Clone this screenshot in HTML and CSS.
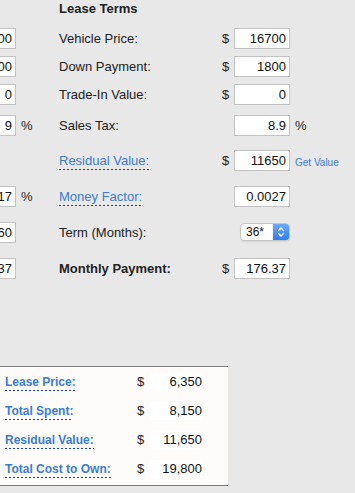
FILE: index.html
```html
<!DOCTYPE html>
<html>

<head>
  <meta charset="utf-8">
  <meta name="viewport" content="width=device-width, initial-scale=1.0">
  <link rel="stylesheet" href="styles.css">
</head>

<body>
  <div class="calculators">
    <!-- loan side, mostly scrolled out of view -->
    <div class="terms">
      <div class="title">Loan Terms</div>

      <div class="label">Vehicle Price:</div>
      <div class="unit">$</div>
      <div class="field">16700</div>
      <div class="suffix"></div>

      <div class="label">Down Payment:</div>
      <div class="unit">$</div>
      <div class="field">1800</div>
      <div class="suffix"></div>

      <div class="label">Trade-In Value:</div>
      <div class="unit">$</div>
      <div class="field">0</div>
      <div class="suffix"></div>

      <div class="label">Sales Tax:</div>
      <div class="unit"></div>
      <div class="field">9</div>
      <div class="suffix">%</div>

      <div class="label"></div>
      <div class="unit"></div>
      <div class="blank"></div>
      <div class="suffix"></div>

      <div class="label"><span class="hint">Interest Rate:</span></div>
      <div class="unit"></div>
      <div class="field">4.17</div>
      <div class="suffix">%</div>

      <div class="label">Term (Months):</div>
      <div class="unit"></div>
      <div class="field">60</div>
      <div class="suffix"></div>

      <div class="label strong">Monthly Payment:</div>
      <div class="unit">$</div>
      <div class="field">337.37</div>
      <div class="suffix"></div>
    </div>

    <!-- lease side -->
    <div class="terms">
      <div class="title">Lease Terms</div>

      <div class="label">Vehicle Price:</div>
      <div class="unit">$</div>
      <div class="field">16700</div>
      <div class="suffix"></div>

      <div class="label">Down Payment:</div>
      <div class="unit">$</div>
      <div class="field">1800</div>
      <div class="suffix"></div>

      <div class="label">Trade-In Value:</div>
      <div class="unit">$</div>
      <div class="field">0</div>
      <div class="suffix"></div>

      <div class="label">Sales Tax:</div>
      <div class="unit"></div>
      <div class="field">8.9</div>
      <div class="suffix">%</div>

      <div class="label"><span class="hint">Residual Value:</span></div>
      <div class="unit">$</div>
      <div class="field">11650</div>
      <div class="suffix"><span class="get-value">Get Value</span></div>

      <div class="label"><span class="hint">Money Factor:</span></div>
      <div class="unit"></div>
      <div class="field">0.0027</div>
      <div class="suffix"></div>

      <div class="label">Term (Months):</div>
      <div class="unit"></div>
      <div class="select-wrap">
        <div class="select">
          <span class="select-text">36*</span>
          <span class="select-arrows">
            <svg width="8" height="12" viewBox="0 0 8 12">
              <path d="M1.5 4.5 L4 2 L6.5 4.5 M1.5 7.5 L4 10 L6.5 7.5" fill="none" stroke="#fff" stroke-width="1.4" stroke-linecap="round" stroke-linejoin="round"/>
            </svg>
          </span>
        </div>
      </div>
      <div class="suffix"></div>

      <div class="label strong">Monthly Payment:</div>
      <div class="unit">$</div>
      <div class="field">176.37</div>
      <div class="suffix"></div>
    </div>
  </div>

  <!-- totals -->
  <div class="totals">
    <div class="total-label"><span class="hint">Lease Price:</span></div>
    <div class="total-unit">$</div>
    <div class="total-value">6,350</div>

    <div class="total-label"><span class="hint">Total Spent:</span></div>
    <div class="total-unit">$</div>
    <div class="total-value">8,150</div>

    <div class="total-label"><span class="hint">Residual Value:</span></div>
    <div class="total-unit">$</div>
    <div class="total-value">11,650</div>

    <div class="total-label"><span class="hint">Total Cost to Own:</span></div>
    <div class="total-unit">$</div>
    <div class="total-value">19,800</div>
  </div>
</body>

</html>
```

FILE: styles.css
```css
/* base */
body {
  margin: 0;
  background: #e8e8e8;
  color: #222;
  font-family: "Liberation Sans", Arial, sans-serif;
  font-size: 13px;
  overflow: hidden;
}

/* two calculators side by side, page scrolled to the right */
.calculators {
  display: flex;
  margin-left: -215px;
}

.terms {
  display: grid;
  grid-template-columns: 163px 12px 56px 43px;
  grid-template-rows: 24px repeat(3, 28px) 35px 35px repeat(3, 36px);
  align-items: center;
}

.title {
  grid-column: 1 / -1;
  align-self: start;
  font-weight: bold;
  line-height: 16px;
  padding-top: 1px;
}

.label {
  white-space: nowrap;
}

.label.strong {
  font-weight: bold;
}

/* dotted help links */
.hint {
  color: #3a7bd5;
  padding-bottom: 2px;
  background: linear-gradient(to right, #1b3f9a 50%, transparent 50%) repeat-x left bottom / 4px 1px;
}

.field {
  box-sizing: border-box;
  height: 21px;
  line-height: 19px;
  background: #fff;
  border: 1px solid #c2c2c2;
  text-align: right;
  padding-right: 3px;
  color: #111;
}

.blank {
  height: 21px;
}

.suffix {
  padding-left: 5px;
  white-space: nowrap;
}

.get-value {
  color: #3a7bd5;
  font-size: 10px;
  position: relative;
  top: 1px;
}

/* select */
.select-wrap {
  display: flex;
  justify-content: flex-end;
}

.select {
  box-sizing: border-box;
  display: flex;
  width: 50px;
  height: 18px;
  background: #fff;
  border: 1px solid #c6c6c6;
  border-radius: 4px;
  overflow: hidden;
  box-shadow: 0 1px 1px rgba(0, 0, 0, 0.08);
}

.select-text {
  flex: 1;
  padding-left: 5px;
  font-size: 12px;
  line-height: 16px;
  color: #111;
}

.select-arrows {
  width: 16px;
  display: flex;
  align-items: center;
  justify-content: center;
  background: linear-gradient(#6aaaf8, #2f7ef0);
}

/* totals box */
.totals {
  display: grid;
  grid-template-columns: 132px 13px 52px;
  grid-auto-rows: 29px;
  align-items: center;
  width: 223px;
  margin: 80px 0 0 -10px;
  padding: 0 0 2px 15px;
  background: #fdfcfa;
  border-top: 1px solid #7d7d7d;
  border-bottom: 1px solid #7d7d7d;
  font-size: 12px;
}

.total-label {
  font-weight: bold;
  white-space: nowrap;
}

.total-unit {
  font-size: 13px;
}

.total-value {
  height: 18px;
  line-height: 18px;
  background: #fff;
  text-align: right;
  font-size: 13px;
  color: #111;
}
```
